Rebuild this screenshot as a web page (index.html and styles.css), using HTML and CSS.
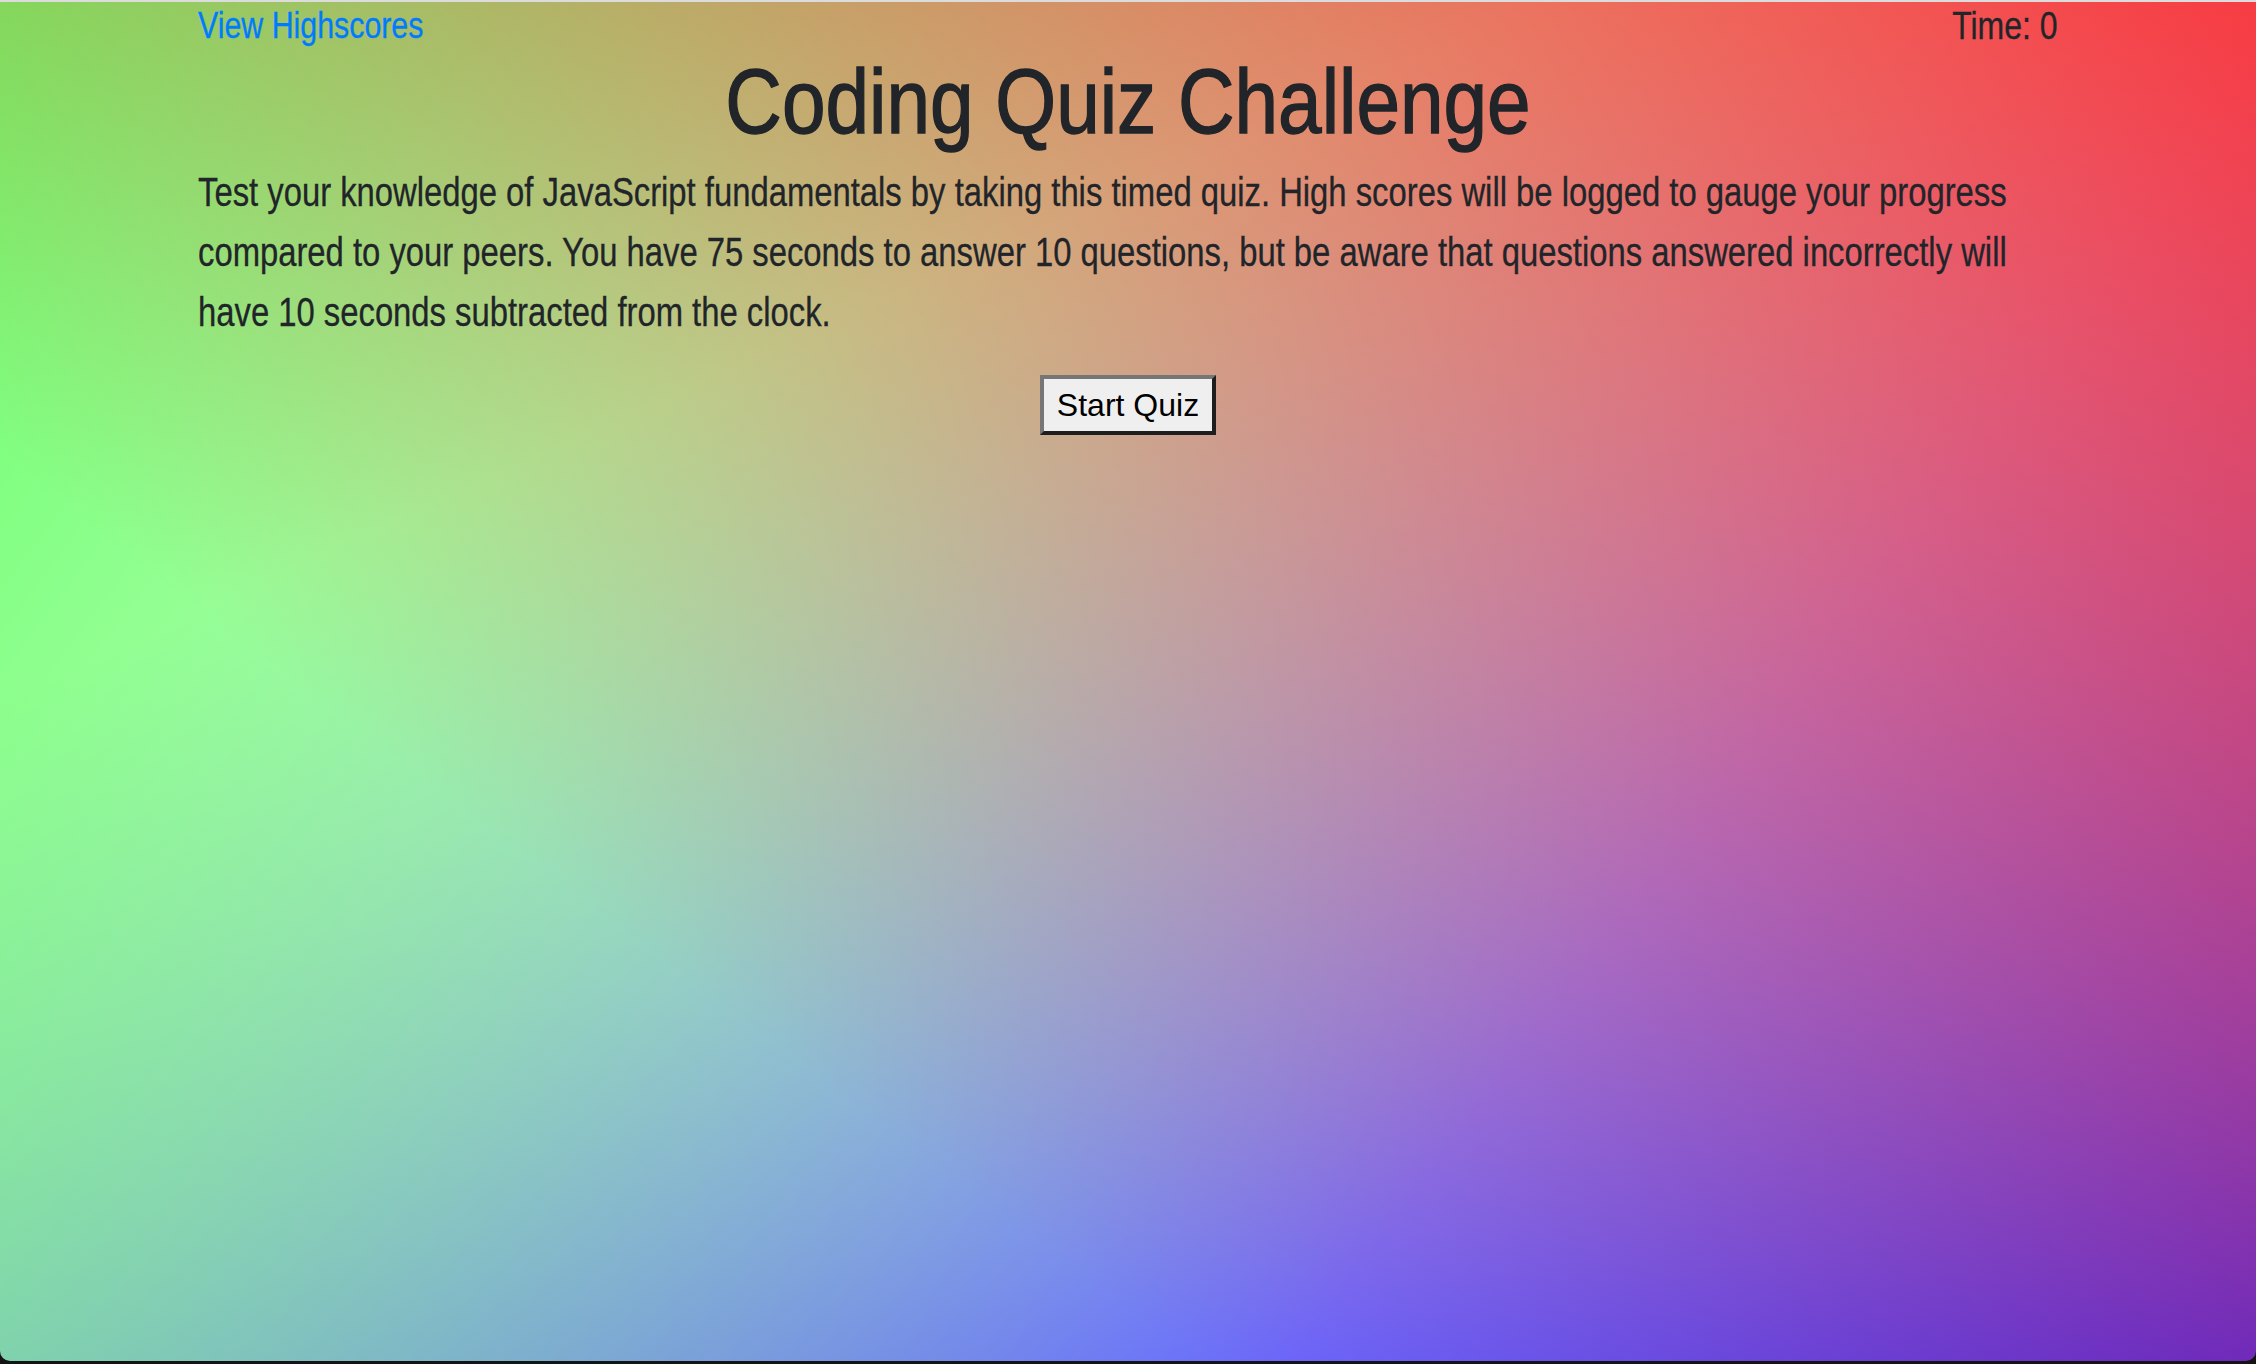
FILE: index.html
```html
<!DOCTYPE html>
<html lang="en">
<head>
<meta charset="utf-8">
<title>Coding Quiz Challenge</title>
<link rel="stylesheet" href="styles.css">
</head>
<body>
<div class="frame-top"></div>
<div class="page">
  <div class="container">
    <header class="topbar">
      <a class="highscores narrow" href="#">View Highscores</a>
      <span class="timer narrow">Time: 0</span>
    </header>
    <h1 class="title">Coding Quiz Challenge</h1>
    <p class="intro narrow">Test your knowledge of JavaScript fundamentals by taking this timed quiz. High scores will be logged to gauge your progress compared to your peers. You have 75 seconds to answer 10 questions, but be aware that questions answered incorrectly will have 10 seconds subtracted from the clock.</p>
    <div class="actions">
      <button class="start" type="button">Start Quiz</button>
    </div>
  </div>
</div>
</body>
</html>
```

FILE: styles.css
```css
html, body {
  margin: 0;
  padding: 0;
}
body {
  background: #141414;
  height: 1364px;
  overflow: hidden;
}
.frame-top {
  height: 2px;
  background: #dcdcdc;
}
.page {
  height: 1359px;
  overflow: hidden;
  border-radius: 0 0 10px 10px;
  background-color: #fff;
  background-image:
    linear-gradient(217deg, rgba(255,20,20,.8), rgba(255,20,20,0) 70.71%),
    linear-gradient(127deg, rgba(70,255,70,.8), rgba(70,255,70,0) 70.71%),
    linear-gradient(336deg, rgba(0,0,255,.8), rgba(0,0,255,0) 70.71%);
  color: #212529;
  font-family: "Liberation Sans", Arial, sans-serif;
}
.container {
  width: 1860px;
  margin: 0 auto;
}
/* Arial Narrow is not available: Liberation Sans squeezed to its 82% widths */
.narrow {
  transform: scaleX(0.82);
  -webkit-text-stroke: 0.3px currentColor;
}
.topbar {
  display: flex;
  justify-content: space-between;
  align-items: center;
  height: 48px;
  line-height: 48px;
}
.highscores {
  font-size: 37px;
  color: #007bff;
  text-decoration: none;
  transform-origin: left center;
}
.timer {
  font-size: 39px;
  color: #212529;
  transform-origin: right center;
}
.title {
  margin: 2px 0 0;
  text-align: center;
  font-size: 90px;
  line-height: 100px;
  font-weight: 400;
  transform: scaleX(0.87);
  transform-origin: center;
  -webkit-text-stroke: 1.4px currentColor;
}
.intro {
  width: 2268px;
  margin: 10px 0 0;
  font-size: 40px;
  line-height: 60px;
  transform-origin: left top;
}
.actions {
  display: flex;
  justify-content: center;
  margin-top: 33px;
}
.start {
  font-family: "Liberation Sans", Arial, sans-serif;
  font-size: 32px;
  line-height: 36px;
  padding: 8px 13px;
  color: #000;
  background: #efefef;
  border: 4px solid;
  border-color: #767676 #1e1e1e #1e1e1e #767676;
  border-radius: 0;
}
```
